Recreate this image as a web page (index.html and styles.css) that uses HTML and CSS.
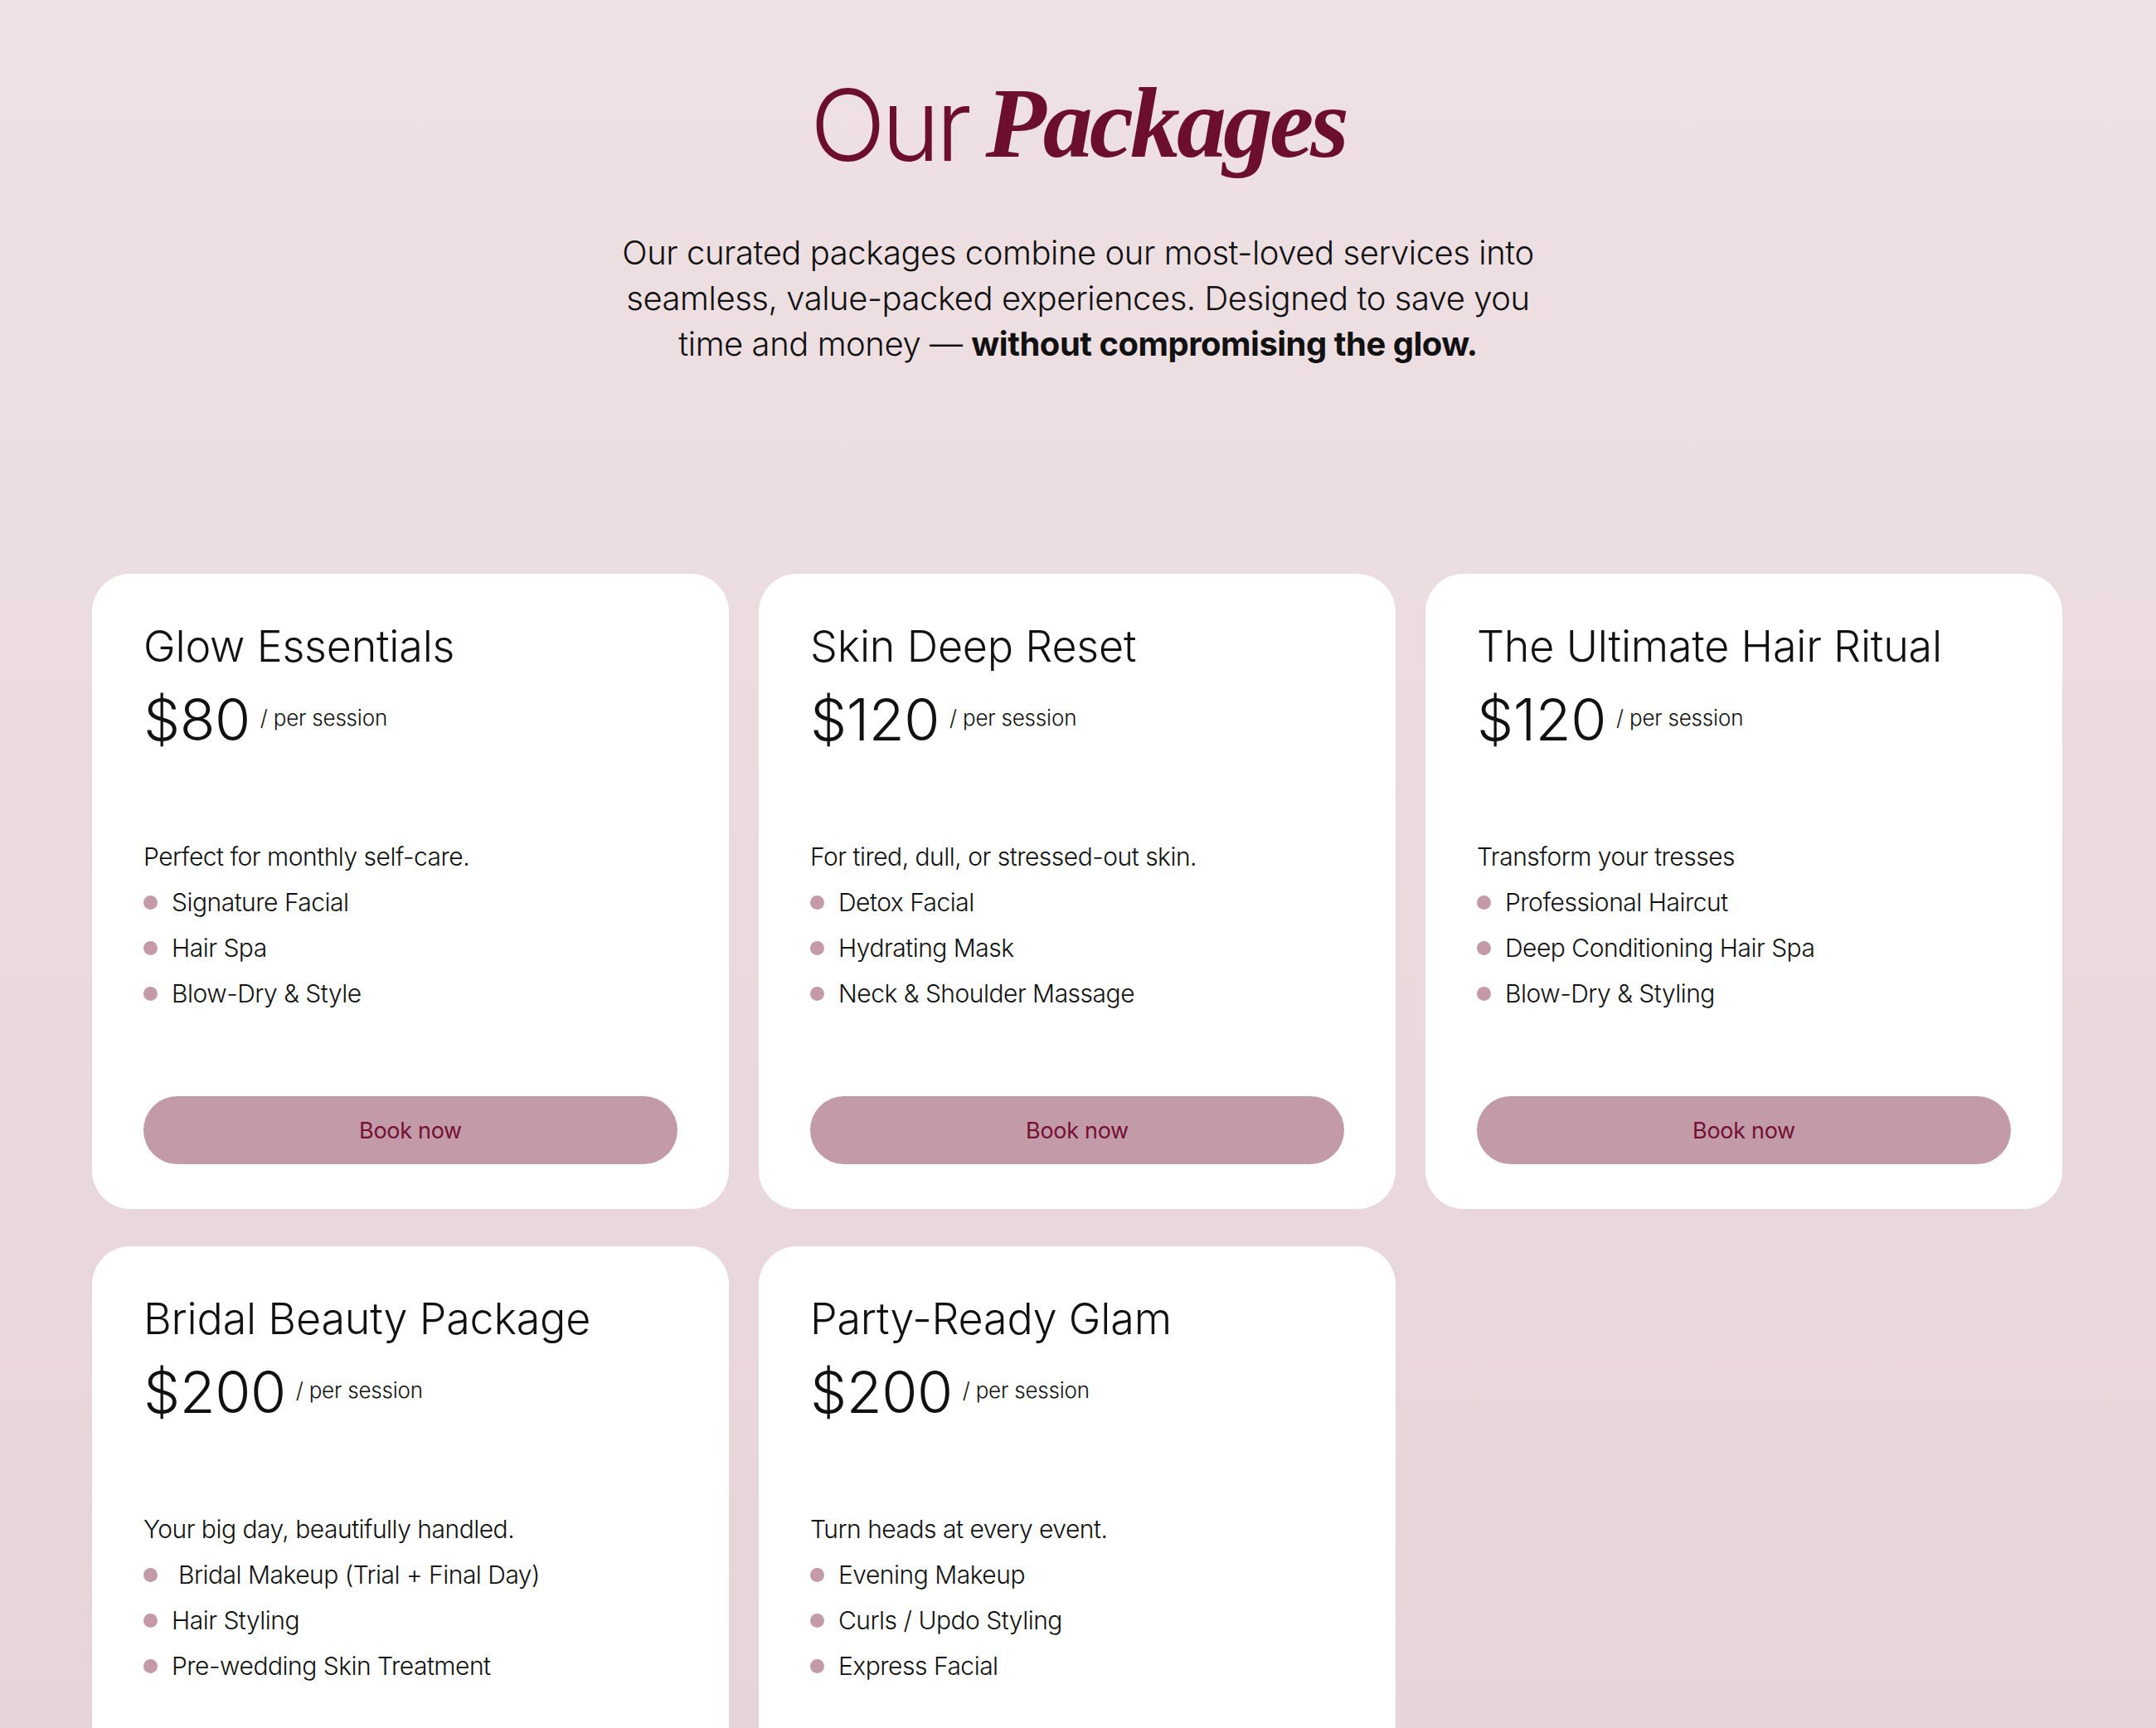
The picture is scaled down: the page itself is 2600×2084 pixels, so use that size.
FILE: index.html
```html
<!DOCTYPE html>
<html lang="en">
<head>
<meta charset="utf-8">
<title>Our Packages</title>
<link rel="stylesheet" href="styles.css">
</head>
<body>
<main class="page">
  <header class="intro">
    <h1 class="intro-title"><span class="title-plain">Our</span> <em class="title-fancy">Packages</em></h1>
    <p class="intro-text">Our curated packages combine our most-loved services into seamless, value-packed experiences. Designed to save you time and money — <strong>without compromising the glow.</strong></p>
  </header>

  <section class="grid">
    <article class="card">
      <h2 class="card-title">Glow Essentials</h2>
      <div class="price"><span class="price-amount">$80</span><span class="price-unit">/ per session</span></div>
      <p class="card-desc">Perfect for monthly self-care.</p>
      <ul class="features">
        <li>Signature Facial</li>
        <li>Hair Spa</li>
        <li>Blow-Dry &amp; Style</li>
      </ul>
      <button class="book">Book now</button>
    </article>

    <article class="card">
      <h2 class="card-title">Skin Deep Reset</h2>
      <div class="price"><span class="price-amount">$120</span><span class="price-unit">/ per session</span></div>
      <p class="card-desc">For tired, dull, or stressed-out skin.</p>
      <ul class="features">
        <li>Detox Facial</li>
        <li>Hydrating Mask</li>
        <li>Neck &amp; Shoulder Massage</li>
      </ul>
      <button class="book">Book now</button>
    </article>

    <article class="card">
      <h2 class="card-title">The Ultimate Hair Ritual</h2>
      <div class="price"><span class="price-amount">$120</span><span class="price-unit">/ per session</span></div>
      <p class="card-desc">Transform your tresses</p>
      <ul class="features">
        <li>Professional Haircut</li>
        <li>Deep Conditioning Hair Spa</li>
        <li>Blow-Dry &amp; Styling</li>
      </ul>
      <button class="book">Book now</button>
    </article>

    <article class="card">
      <h2 class="card-title">Bridal Beauty Package</h2>
      <div class="price"><span class="price-amount">$200</span><span class="price-unit">/ per session</span></div>
      <p class="card-desc">Your big day, beautifully handled.</p>
      <ul class="features">
        <li>&nbsp;Bridal Makeup (Trial + Final Day)</li>
        <li>Hair Styling</li>
        <li>Pre-wedding Skin Treatment</li>
      </ul>
      <button class="book">Book now</button>
    </article>

    <article class="card">
      <h2 class="card-title">Party-Ready Glam</h2>
      <div class="price"><span class="price-amount">$200</span><span class="price-unit">/ per session</span></div>
      <p class="card-desc">Turn heads at every event.</p>
      <ul class="features">
        <li>Evening Makeup</li>
        <li>Curls / Updo Styling</li>
        <li>Express Facial</li>
      </ul>
      <button class="book">Book now</button>
    </article>
  </section>
</main>
</body>
</html>
```

FILE: styles.css
```css
* { box-sizing: border-box; }

html, body {
  margin: 0;
  padding: 0;
}

body {
  min-height: 2084px;
  background: linear-gradient(180deg, #eee1e3 0%, #e9d8dd 60%, #e6d3d9 100%);
  font-family: Inter, "Noto Sans", "Liberation Sans", sans-serif;
  font-weight: 300;
  color: #111;
}

.page {
  padding: 77px 0 0;
}

.intro {
  display: flex;
  flex-direction: column;
  align-items: center;
  text-align: center;
}

.intro-title {
  margin: 0;
  font-size: 120px;
  line-height: 144px;
  height: 144px;
  font-weight: 300;
  color: #6c0f2c;
  word-spacing: -12px;
}

.title-plain {
  font-family: Inter, "Liberation Sans", sans-serif;
  font-weight: 300;
  letter-spacing: -5px;
}

.title-fancy {
  font-family: "Liberation Serif", "DejaVu Serif", serif;
  font-style: italic;
  font-weight: 700;
  letter-spacing: -4px;
  vertical-align: 5px;
}

.intro-text {
  margin: 56px 0 0;
  max-width: 1120px;
  font-size: 40px;
  line-height: 55px;
  font-weight: 300;
  color: #111;
  letter-spacing: -0.45px;
}

.intro-text strong {
  font-weight: 700;
  letter-spacing: -0.5px;
}

.grid {
  display: grid;
  grid-template-columns: repeat(3, 1fr);
  column-gap: 36px;
  row-gap: 45px;
  width: 2376px;
  margin: 250px 0 0 111px;
}

.card {
  background: #ffffff;
  border-radius: 46px;
  padding: 57px 62px 54px;
  display: flex;
  flex-direction: column;
}

.card-title {
  margin: 0;
  font-size: 52px;
  line-height: 62px;
  font-weight: 300;
  color: #111;
  letter-spacing: -0.2px;
}

.price {
  display: flex;
  align-items: center;
  gap: 12px;
  margin-top: 15px;
  height: 84px;
}

.price-amount {
  font-size: 70px;
  line-height: 84px;
  font-weight: 300;
  letter-spacing: -0.5px;
}

.price-unit {
  font-size: 26px;
  line-height: 30px;
  font-weight: 300;
  margin-top: -4px;
  letter-spacing: -0.2px;
}

.card-desc {
  margin: 96px 0 0;
  font-size: 30px;
  line-height: 55px;
  font-weight: 300;
  letter-spacing: -0.5px;
}

.features {
  list-style: none;
  margin: 0;
  padding: 0;
}

.features li {
  display: flex;
  align-items: center;
  font-size: 30px;
  line-height: 55px;
  font-weight: 300;
  letter-spacing: -0.5px;
}

.features li::before {
  content: "";
  width: 17px;
  height: 17px;
  border-radius: 50%;
  background: #c49aa9;
  margin-right: 17px;
  flex: none;
}

.book {
  margin-top: 96px;
  height: 82px;
  width: 100%;
  border: none;
  border-radius: 999px;
  background: #c29aa8;
  color: #741033;
  font-family: Inter, "Noto Sans", "Liberation Sans", sans-serif;
  font-size: 27px;
  font-weight: 400;
  letter-spacing: -0.3px;
  cursor: pointer;
}
```
